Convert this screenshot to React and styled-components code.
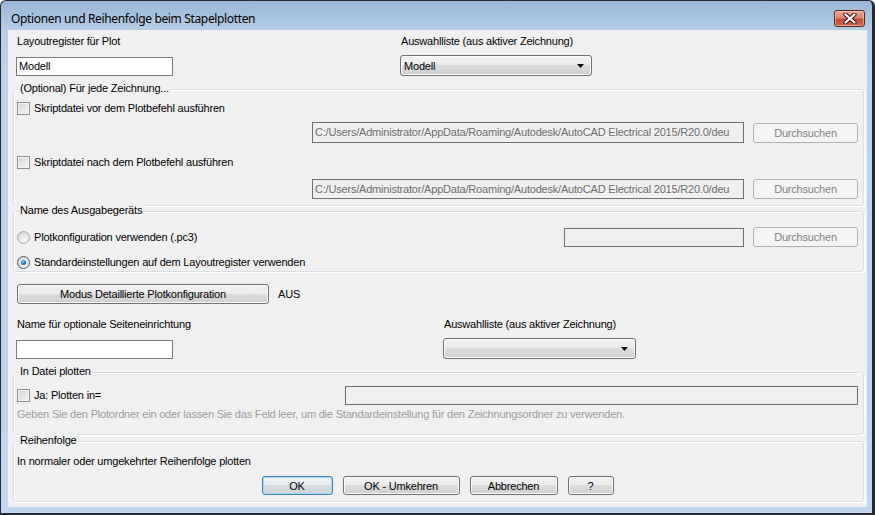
import React from 'react';
import styled, { createGlobalStyle, css } from 'styled-components';

const GlobalStyle = createGlobalStyle`
  html, body {
    margin: 0;
    padding: 0;
    background: #ffffff;
  }
  body {
    font-family: 'Liberation Sans', Arial, sans-serif;
    font-size: 11px;
    letter-spacing: -0.2px;
    color: #000;
  }
  * {
    box-sizing: border-box;
  }
`;

const Window = styled.div`
  width: 875px;
  height: 515px;
  display: flex;
  flex-direction: column;
  border-style: solid;
  border-color: #262a30;
  border-width: 1px 3px 2px 1px;
  border-radius: 6px 6px 0 0;
  padding: 0 5px 6px 7px;
  background: linear-gradient(#9ab6d5 0px, #b6cde6 29px, #bcd3ec 60px, #c0d6ee 100%);
`;

const TitleBar = styled.div`
  height: 29px;
  display: flex;
  justify-content: space-between;
  align-items: flex-start;
`;

const Title = styled.div`
  padding: 10px 0 0 3px;
  font-family: 'Noto Sans', 'Open Sans', sans-serif;
  font-size: 12px;
  letter-spacing: -0.35px;
  line-height: 16px;
  color: #000;
`;

const CloseButton = styled.div`
  width: 31px;
  height: 17px;
  margin: 9px 2px 0 0;
  display: flex;
  align-items: center;
  justify-content: center;
  border: 1px solid #5a2620;
  border-radius: 3px;
  background: linear-gradient(#e8a593 0%, #d98a76 45%, #c34a33 55%, #d06a4f 100%);
  box-shadow: inset 0 0 0 1px rgba(255, 220, 210, 0.5);
`;

const Client = styled.div`
  flex: 1;
  background: #f0f0f0;
  padding: 0 0 5px 0;
  display: flex;
  flex-direction: column;
`;

const FieldRow = styled.div`
  display: flex;
  padding-left: 8px;
  margin-top: ${(p) => p.$top}px;
`;

const FieldColumn = styled.div`
  width: ${(p) => p.$width}px;
  display: flex;
  flex-direction: column;
  align-items: flex-start;
`;

const Label = styled.div`
  line-height: 13px;
  height: 13px;
  padding-left: 1px;
  white-space: nowrap;
`;

const TextBox = styled.div`
  width: ${(p) => p.$width}px;
  height: ${(p) => p.$height || 19}px;
  margin-top: ${(p) => p.$top || 0}px;
  border: 1px solid #7a7a7a;
  background: #ffffff;
  padding: 0 2px;
  line-height: ${(p) => (p.$height || 19) - 2}px;
  white-space: nowrap;
  overflow: hidden;
  ${(p) =>
    p.$disabled &&
    css`
      background: #f0f0f0;
      border-color: #6f6f6f;
      color: #6d6d6d;
    `}
`;

const ComboBox = styled.div`
  width: ${(p) => p.$width}px;
  height: 21px;
  margin-top: 7px;
  display: flex;
  align-items: center;
  justify-content: space-between;
  padding: 0 7px 0 3px;
  border: 1px solid #707070;
  border-radius: 3px;
  background: linear-gradient(#f2f2f2 0%, #ebebeb 49%, #dddddd 50%, #cfcfcf 100%);
  box-shadow: inset 0 0 0 1px #fcfcfc;
`;

const Group = styled.div`
  position: relative;
  margin: ${(p) => p.$top}px 3px 0 5px;
  padding: ${(p) => p.$pad};
  border: 1px solid #d5dfe5;
  border-radius: 3px;
  box-shadow: inset 1px 1px 0 #ffffff, 1px 1px 0 #ffffff;
  display: flex;
  flex-direction: column;
`;

const Legend = styled.div`
  position: absolute;
  top: -8px;
  left: 5px;
  padding: 0 1px;
  line-height: 13px;
  background: #f0f0f0;
  white-space: nowrap;
`;

const OptionRow = styled.div`
  display: flex;
  align-items: center;
  height: ${(p) => p.$height || 13}px;
  margin-top: ${(p) => p.$top || 0}px;
`;

const CheckBox = styled.span`
  width: 13px;
  height: 13px;
  flex: none;
  border: 1px solid #8e8f8f;
  background: linear-gradient(135deg, #cdd0d4 0%, #e6e7e8 50%, #f7f7f7 100%);
  box-shadow: inset 0 0 0 1px #f4f4f4;
`;

const Radio = styled.span`
  width: 13px;
  height: 13px;
  flex: none;
  border-radius: 50%;
  border: 1px solid ${(p) => (p.$checked ? '#4a5a6c' : '#a9abad')};
  background: radial-gradient(circle at 60% 65%, #f8f8f8 0%, #dcdcdc 70%, #cfcfcf 100%);
  display: flex;
  align-items: center;
  justify-content: center;
  &::after {
    content: '';
    display: ${(p) => (p.$checked ? 'block' : 'none')};
    width: 5px;
    height: 5px;
    border-radius: 50%;
    background: radial-gradient(circle at 40% 35%, #7fd0ff 0%, #1a6fc0 55%, #0b3f7a 100%);
  }
`;

const OptionText = styled.span`
  margin-left: 4px;
  line-height: 13px;
  white-space: nowrap;
`;

const PathRow = styled.div`
  display: flex;
  justify-content: flex-end;
  align-items: center;
  gap: 9px;
  height: ${(p) => p.$height || 21}px;
  margin-top: ${(p) => p.$top}px;
`;

const Spacer = styled.div`
  flex: 1;
`;

const Button = styled.div`
  width: ${(p) => p.$width}px;
  height: ${(p) => p.$height || 20}px;
  margin-left: ${(p) => p.$left || 0}px;
  flex: none;
  display: flex;
  align-items: center;
  justify-content: center;
  border: 1px solid #707070;
  border-radius: 3px;
  background: linear-gradient(#f2f2f2 0%, #ebebeb 49%, #dddddd 50%, #cfcfcf 100%);
  box-shadow: inset 0 0 0 1px #fbfbfb;
  white-space: nowrap;
  ${(p) =>
    p.$variant === 'disabled' &&
    css`
      border-color: #adb2b5;
      background: #f4f4f4;
      box-shadow: none;
      color: #838383;
    `}
  ${(p) =>
    p.$variant === 'default' &&
    css`
      border-color: #3c7fb1;
      box-shadow: inset 0 0 0 1px #a9dcf6;
      background: linear-gradient(#f0f3f5 0%, #e8ecef 49%, #d9dde1 50%, #cdd3d8 100%);
    `}
`;

const ButtonLine = styled.div`
  display: flex;
  align-items: center;
  gap: 9px;
  padding-left: 9px;
  margin-top: ${(p) => p.$top}px;
`;

const HintText = styled.div`
  margin-top: 3px;
  line-height: 13px;
  height: 13px;
  color: #9d9d9d;
  white-space: nowrap;
`;

const PlainText = styled.div`
  line-height: 13px;
  height: 13px;
  white-space: nowrap;
`;

const ButtonBar = styled.div`
  display: flex;
  justify-content: center;
  gap: 10px;
  margin-top: 8px;
`;

const Arrow = () => (
  <svg width="7" height="4" viewBox="0 0 7 4">
    <polygon points="0,0 7,0 3.5,4" fill="#000" />
  </svg>
);

const CloseGlyph = () => (
  <svg width="14" height="11" viewBox="0 0 14 11">
    <path d="M2.5 1.5 L11.5 9.5 M11.5 1.5 L2.5 9.5" stroke="#3d1610" strokeWidth="4.2" strokeLinecap="round" />
    <path d="M2.5 1.5 L11.5 9.5 M11.5 1.5 L2.5 9.5" stroke="#ffffff" strokeWidth="2.2" strokeLinecap="round" />
  </svg>
);

const scriptPath =
  'C:/Users/Administrator/AppData/Roaming/Autodesk/AutoCAD Electrical 2015/R20.0/deu';

const App = () => (
  <>
    <GlobalStyle />
    <Window>
      <TitleBar>
        <Title>Optionen und Reihenfolge beim Stapelplotten</Title>
        <CloseButton>
          <CloseGlyph />
        </CloseButton>
      </TitleBar>
      <Client>
        <FieldRow $top={5}>
          <FieldColumn $width={384}>
            <Label>Layoutregister für Plot</Label>
            <TextBox $width={157} $top={9}>Modell</TextBox>
          </FieldColumn>
          <FieldColumn $width={300}>
            <Label>Auswahlliste (aus aktiver Zeichnung)</Label>
            <ComboBox $width={192}>
              <span>Modell</span>
              <Arrow />
            </ComboBox>
          </FieldColumn>
        </FieldRow>

        <Group $top={13} $pad="12px 5px 6px 3px">
          <Legend>(Optional) Für jede Zeichnung...</Legend>
          <OptionRow>
            <CheckBox />
            <OptionText>Skriptdatei vor dem Plotbefehl ausführen</OptionText>
          </OptionRow>
          <PathRow $top={7}>
            <TextBox $width={432} $height={21} $disabled>{scriptPath}</TextBox>
            <Button $width={105} $variant="disabled">Durchsuchen</Button>
          </PathRow>
          <OptionRow $top={13}>
            <CheckBox />
            <OptionText>Skriptdatei nach dem Plotbefehl ausführen</OptionText>
          </OptionRow>
          <PathRow $top={9}>
            <TextBox $width={432} $height={20} $disabled>{scriptPath}</TextBox>
            <Button $width={105} $variant="disabled">Durchsuchen</Button>
          </PathRow>
        </Group>

        <Group $top={5} $pad="15px 5px 2px 3px">
          <Legend>Name des Ausgabegeräts</Legend>
          <OptionRow $height={20}>
            <Radio />
            <OptionText>Plotkonfiguration verwenden (.pc3)</OptionText>
            <Spacer />
            <TextBox $width={180} $disabled />
            <Button $width={105} $left={9} $variant="disabled">
              Durchsuchen
            </Button>
          </OptionRow>
          <OptionRow $top={9}>
            <Radio $checked />
            <OptionText>Standardeinstellungen auf dem Layoutregister verwenden</OptionText>
          </OptionRow>
        </Group>

        <ButtonLine $top={12}>
          <Button $width={252}>Modus Detaillierte Plotkonfiguration</Button>
          <span>AUS</span>
        </ButtonLine>

        <FieldRow $top={14}>
          <FieldColumn $width={427}>
            <Label>Name für optionale Seiteneinrichtung</Label>
            <TextBox $width={157} $top={9} />
          </FieldColumn>
          <FieldColumn $width={300}>
            <Label>Auswahlliste (aus aktiver Zeichnung)</Label>
            <ComboBox $width={193}>
              <span />
              <Arrow />
            </ComboBox>
          </FieldColumn>
        </FieldRow>

        <Group $top={13} $pad="13px 5px 13px 3px">
          <Legend>In Datei plotten</Legend>
          <OptionRow $height={19}>
            <CheckBox />
            <OptionText>Ja: Plotten in=</OptionText>
            <Spacer />
            <TextBox $width={513} $disabled />
          </OptionRow>
          <HintText>
            Geben Sie den Plotordner ein oder lassen Sie das Feld leer, um die Standardeinstellung für den Zeichnungsordner zu verwenden.
          </HintText>
        </Group>

        <Group $top={6} $pad="13px 5px 6px 3px">
          <Legend>Reihenfolge</Legend>
          <PlainText>In normaler oder umgekehrter Reihenfolge plotten</PlainText>
          <ButtonBar>
            <Button $width={71} $height={19} $variant="default">OK</Button>
            <Button $width={117} $height={19}>OK - Umkehren</Button>
            <Button $width={88} $height={19}>Abbrechen</Button>
            <Button $width={46} $height={19}>?</Button>
          </ButtonBar>
        </Group>
      </Client>
    </Window>
  </>
);

export default App;
